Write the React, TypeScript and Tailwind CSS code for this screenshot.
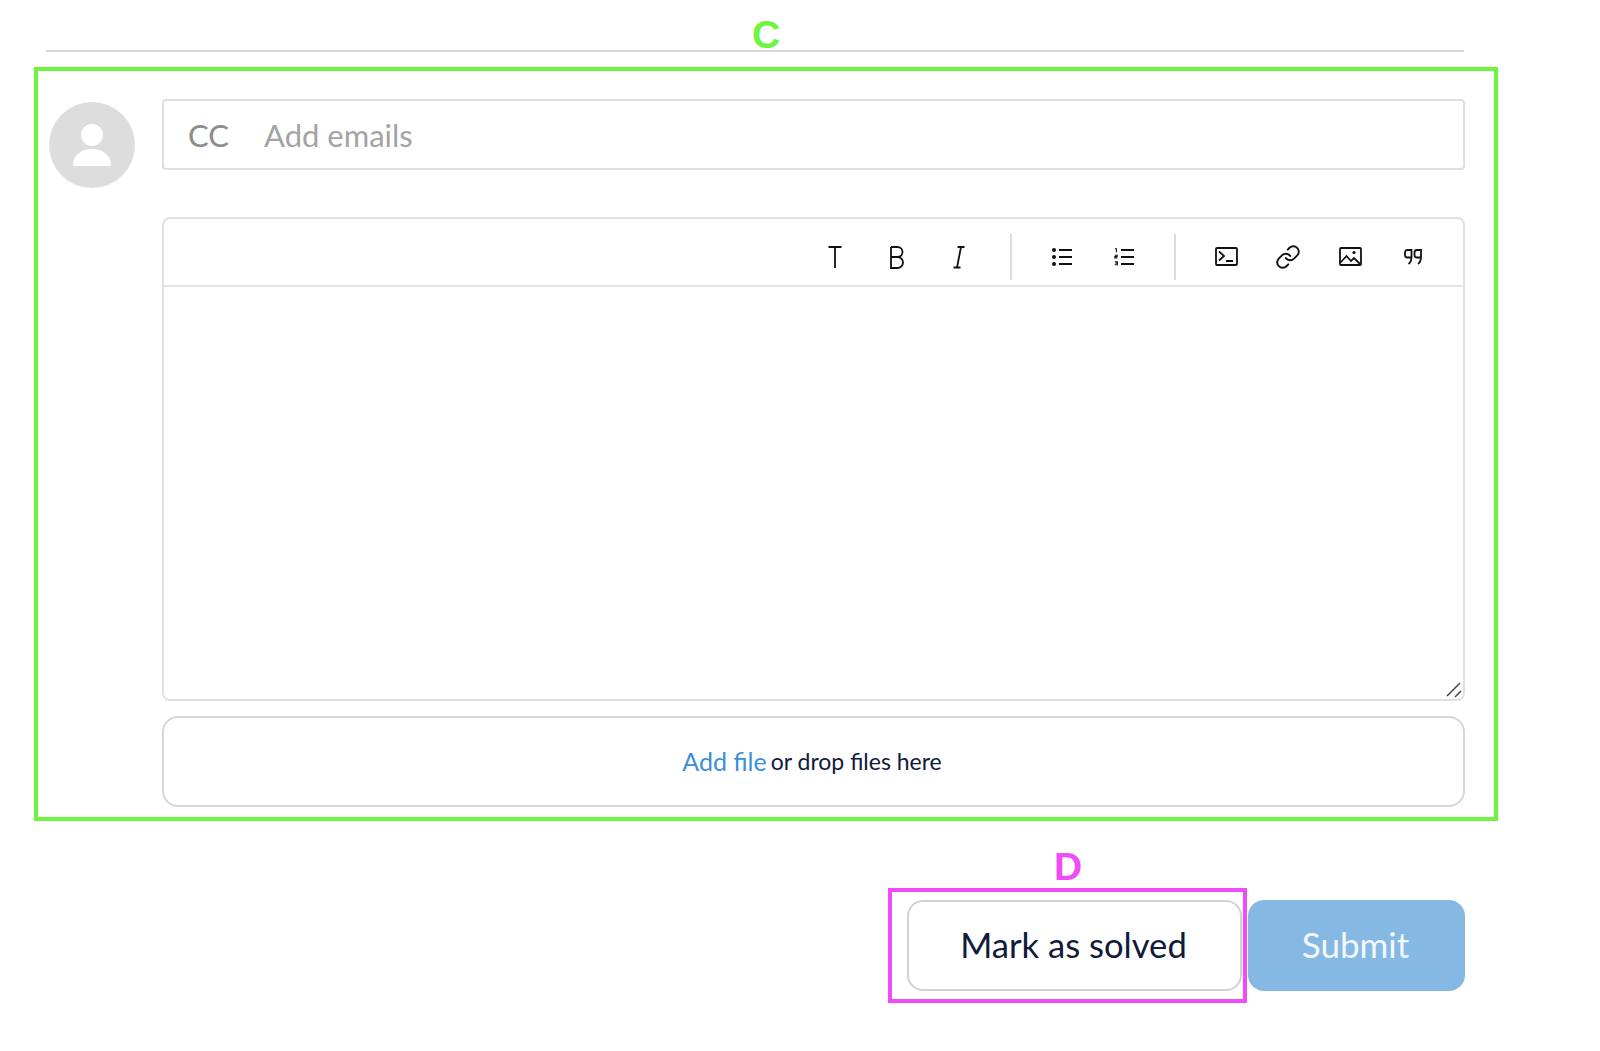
import type { ReactNode } from 'react';

const stroke = { fill: 'none', stroke: '#111111', strokeWidth: 1.8 };

function ToolButton({ children }: { children: ReactNode }) {
  return <div className="flex h-6 w-[62px] items-center justify-center">{children}</div>;
}

function Separator({ className }: { className: string }) {
  return <div className={`h-[46px] w-0.5 bg-[#dcdcdc] ${className}`} />;
}

function Toolbar() {
  return (
    <div className="flex h-[68px] items-center justify-end border-b-2 border-[#e4e4e4] pr-[20px] pt-[9px]">
      <ToolButton>
        <svg width="14" height="24" viewBox="0 0 14 24" {...stroke}>
          <path d="M0.5 2h13M7 2v21" />
        </svg>
      </ToolButton>
      <ToolButton>
        <svg width="14" height="24" viewBox="0 0 14 24" {...stroke}>
          <path d="M1 2h6.500a5 5 0 0 1 0 10H1M7.500 12a5.500 5.500 0 0 1 0 11H1V2" />
        </svg>
      </ToolButton>
      <ToolButton>
        <svg width="12" height="24" viewBox="0 0 12 24" {...stroke}>
          <path d="M4.500 2h7M.5 22.500h7M8 2 4 22.500" />
        </svg>
      </ToolButton>
      <Separator className="ml-[20px] mr-[19px]" />
      <ToolButton>
        <svg width="20" height="18" viewBox="0 0 20 18" {...stroke}>
          <circle cx="2" cy="2" r="2" fill="#111111" stroke="none" />
          <circle cx="2" cy="9" r="2" fill="#111111" stroke="none" />
          <circle cx="2" cy="16" r="2" fill="#111111" stroke="none" />
          <path d="M7 2h13M7 9h13M7 16h13" />
        </svg>
      </ToolButton>
      <ToolButton>
        <svg width="20" height="18" viewBox="0 0 20 18" {...stroke}>
          <path d="M1 .8h1.400v3.400" strokeWidth="1.100" />
          <path d="M.8 7.200h2.400v1.300H.8v1.400h2.600" strokeWidth="1.100" />
          <path d="M.8 13.800h2.600v1.300H1.500h1.900v1.600H.8" strokeWidth="1.100" />
          <path d="M7 2h13M7 9h13M7 16h13" />
        </svg>
      </ToolButton>
      <Separator className="ml-[19px] mr-[19px]" />
      <ToolButton>
        <svg width="23" height="19" viewBox="0 0 23 19" {...stroke}>
          <rect x="1" y="1" width="21" height="17" rx="1" />
          <path d="m4 4.500 5 4.500-5 4.500M11 14h7" />
        </svg>
      </ToolButton>
      <ToolButton>
        <svg width="26" height="26" viewBox="0 0 24 24" {...stroke} strokeLinecap="round">
          <path d="M10 13a5 5 0 0 0 7.540.54l3-3a5 5 0 0 0-7.070-7.070l-1.720 1.710" />
          <path d="M14 11a5 5 0 0 0-7.540-.54l-3 3a5 5 0 0 0 7.070 7.070l1.710-1.710" />
        </svg>
      </ToolButton>
      <ToolButton>
        <svg width="23" height="19" viewBox="0 0 23 19" {...stroke}>
          <rect x="1" y="1" width="21" height="17" rx="1" />
          <circle cx="15" cy="5.500" r="1.600" fill="#111111" stroke="none" />
          <path d="m1.500 15.500 6-6.500 4.500 5 3-3 6 6" />
        </svg>
      </ToolButton>
      <ToolButton>
        <svg className="ml-[2px]" width="18" height="16" viewBox="0 0 18 16" {...stroke}>
          <path d="M7.500 8.500H3.500A2.500 2.500 0 0 1 1 6V3.500A2.500 2.500 0 0 1 3.500 1h4v7c0 3-1 5.500-3 7" />
          <path d="M17 8.500h-4a2.500 2.500 0 0 1-2.500-2.500V3.500A2.500 2.500 0 0 1 13 1h4v7c0 3-1 5.500-3 7" />
        </svg>
      </ToolButton>
    </div>
  );
}

export default function App() {
  return (
    <div className="relative h-[1051px] w-[1600px] overflow-hidden bg-white font-['Lato',sans-serif] text-[#101a3a]">
      <div className="absolute left-[752px] top-[12px] font-['Liberation_Sans',sans-serif] text-[39px] leading-[46px] font-bold text-[#6df53f]">
        C
      </div>
      <div className="absolute left-[1054px] top-[844px] font-['Liberation_Sans',sans-serif] text-[39px] leading-[46px] font-bold text-[#ef4cf5]">
        D
      </div>

      <div className="ml-[46px] pt-[50px]">
        <div className="h-0.5 w-[1418px] bg-[#d6d6d6]" />
      </div>

      {/* Reply form */}
      <div className="ml-[34px] mt-[15px] flex h-[754px] w-[1464px] border-4 border-[#6df53f] pl-[11px] pt-[28px]">
        <div className="mt-[3px] flex h-[86px] w-[86px] shrink-0 items-center justify-center rounded-full bg-[#dddddd]">
          <svg width="38" height="42" viewBox="0 0 38 42" fill="#fff">
            <circle cx="19" cy="11" r="11" />
            <path d="M0 42c0-11 8-17 19-17s19 6 19 17z" />
          </svg>
        </div>
        <div className="ml-[27px] w-[1303px]">
          <div className="flex h-[71px] items-center rounded-[4px] border-2 border-[#dfdfdf] pl-[24px] pt-[2px] text-[31px] leading-none">
            <span className="w-[76px] text-[#8c8c8c]">CC</span>
            <span className="text-[#a3a3a3]">Add emails</span>
          </div>

          <div className="relative mt-[47px] flex h-[484px] flex-col overflow-hidden rounded-[8px] border-2 border-[#e1e1e1]">
            <Toolbar />
            <textarea className="block w-full flex-1 resize-none bg-white outline-none" />
            <svg className="absolute bottom-[1px] right-[1px]" width="16" height="16" viewBox="0 0 16 16" fill="none" stroke="#444444" strokeWidth="1.500">
              <path d="M1 14 14 1M9 15l6-6" />
            </svg>
          </div>

          <div className="mt-[15px] flex h-[91px] items-center justify-center rounded-[16px] border-2 border-[#d6d6d6] pr-[3px] pt-[1px] text-[23px]">
            <span className="text-[25px] text-[#3a8fd9]">Add file</span>
            <span className="mb-[2px] ml-[4px]">or drop files here</span>
          </div>
        </div>
      </div>

      {/* Actions */}
      <div className="ml-[888px] mt-[67px] flex w-[577px] items-center">
        <div className="flex h-[115px] w-[359px] items-center border-4 border-[#ef4cf5] pl-[15px]">
          <button className="h-[91px] w-[335px] rounded-[16px] border-2 border-[#d2d2d2] bg-white pb-[2px] pr-[2px] text-[34.600px]">
            Mark as solved
          </button>
        </div>
        <button className="ml-px h-[91px] flex-1 rounded-[16px] bg-[#85b9e3] pb-[2px] pr-[2px] text-[35px] text-[#f2f7fc]">
          Submit
        </button>
      </div>
    </div>
  );
}
